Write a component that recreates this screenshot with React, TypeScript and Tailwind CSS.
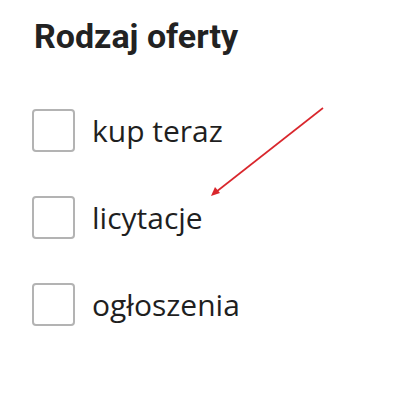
import React from 'react';

const options = ['kup teraz', 'licytacje', 'ogłoszenia'];

export default function App() {
  return (
    <main className="relative w-[400px] h-[400px] bg-white overflow-hidden">
      <section className="flex flex-col pt-[16px] pl-[32px]">
        <h2 className="ml-[2px] font-['Roboto',sans-serif] font-bold text-[34px] leading-[40px] text-[#222222]">
          Rodzaj oferty
        </h2>
        <ul className="flex flex-col gap-[44px] mt-[53px]">
          {options.map((label) => (
            <li key={label} className="flex items-center gap-[17px] h-[43px]">
              <span className="w-[43px] h-[43px] shrink-0 rounded-[4px] border-2 border-[#b3b3b3] bg-white" />
              <span className="font-['Open_Sans',sans-serif] text-[30px] leading-[41px] text-[#1f1f1f]">
                {label}
              </span>
            </li>
          ))}
        </ul>
      </section>

      {/* annotation arrow */}
      <svg className="absolute left-0 top-0 pointer-events-none" width="400" height="400" viewBox="0 0 400 400">
        <line x1="323" y1="108" x2="216" y2="192" stroke="#d9262c" strokeWidth="1.6" />
        <polygon points="211,196 215,187 220,193" fill="#d9262c" />
      </svg>
    </main>
  );
}
